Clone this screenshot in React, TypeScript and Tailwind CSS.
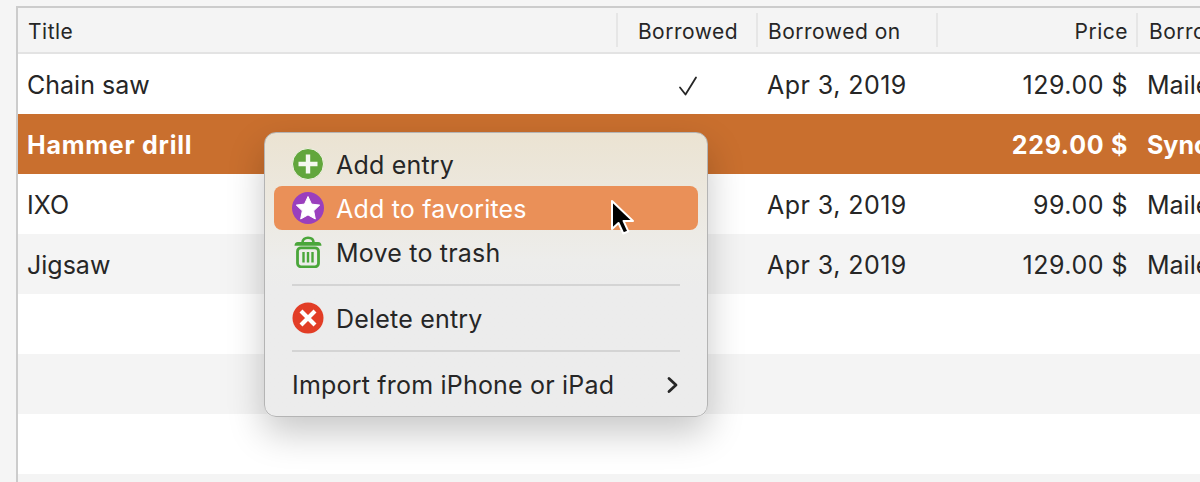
const font = "font-['Inter','Liberation_Sans',sans-serif]";
const cols = "grid grid-cols-[600px_140px_180px_200px_1fr]";

type RowProps = {
  title?: string;
  borrowed?: boolean;
  date?: string;
  price?: string;
  via?: string;
  tone: "white" | "gray" | "selected";
};

const rows: RowProps[] = [
  { title: "Chain saw", borrowed: true, date: "Apr 3, 2019", price: "129.00 $", via: "Mailed", tone: "white" },
  { title: "Hammer drill", borrowed: true, date: "Apr 3, 2019", price: "229.00 $", via: "Synced", tone: "selected" },
  { title: "IXO", date: "Apr 3, 2019", price: "99.00 $", via: "Mailed", tone: "white" },
  { title: "Jigsaw", date: "Apr 3, 2019", price: "129.00 $", via: "Mailed", tone: "gray" },
  { tone: "white" },
  { tone: "gray" },
  { tone: "white" },
  { tone: "gray" },
];

function HeaderCell({ label, className, sep = true }: { label: string; className: string; sep?: boolean }) {
  return (
    <div className={`h-[34px] pt-[3px] flex items-center whitespace-nowrap overflow-hidden ${sep ? "border-r-2 border-[#e6e6e6]" : ""} ${className}`}>
      {label}
    </div>
  );
}

function Row({ title, borrowed, date, price, via, tone }: RowProps) {
  const selected = tone === "selected";
  const bg = selected ? "bg-[#c96f2e] text-white font-bold" : tone === "gray" ? "bg-[#f4f4f4] text-[#262626]" : "bg-white text-[#262626]";
  return (
    <div className={`${cols} h-[60px] pt-[2px] items-center text-[25px] leading-none whitespace-nowrap ${bg}`}>
      <div className={`pl-[9px] ${selected ? "tracking-[0.75px]" : ""}`}>{title}</div>
      <div className="flex justify-center pt-[1px]">
        {borrowed && !selected && (
          <svg width="20" height="20" viewBox="0 0 20 20" fill="none" stroke="#262626" strokeWidth="1.8" strokeLinecap="round" strokeLinejoin="round">
            <path d="M2 11.500l5.500 7L18 1.500" />
          </svg>
        )}
      </div>
      <div className="pl-[9px] tracking-[0.45px]">{selected ? "" : date}</div>
      <div className={`pr-[10px] text-right ${selected ? "tracking-[0.7px]" : "tracking-[0.5px]"}`}>{price}</div>
      <div className="pl-[9px]">{via}</div>
    </div>
  );
}

function PlusIcon() {
  return (
    <svg width="32" height="32" viewBox="0 0 32 32" className="shrink-0">
      <circle cx="16" cy="16" r="15.500" fill="#62a63c" stroke="#f3f3e6" strokeWidth="1" />
      <path d="M16 6.500v19M6.500 16h19" stroke="#f5f8ef" strokeWidth="4.400" />
    </svg>
  );
}

function StarIcon() {
  return (
    <svg width="32" height="32" viewBox="0 0 32 32" className="shrink-0">
      <circle cx="16" cy="16" r="16" fill="#9a3fbd" />
      <path d="M16 4.500l3.500 7.600 8.200 1-6 5.700 1.600 8.200L16 22.900 8.700 27l1.600-8.200-6-5.700 8.200-1z" fill="#fff" stroke="#fff" strokeWidth="1" strokeLinejoin="round" />
    </svg>
  );
}

function TrashIcon() {
  return (
    <svg width="32" height="32" viewBox="0 0 32 32" fill="none" className="shrink-0">
      <path d="M10.500 6.500C10.500 3.500 12.800 1.800 16 1.800s5.500 1.700 5.500 4.700" stroke="#4aa63a" strokeWidth="2.600" />
      <path d="M2.500 9.800c0-2.400 1.200-3.800 3.400-3.800h20.200c2.200 0 3.400 1.400 3.400 3.800z" fill="#4aa63a" />
      <rect x="5.500" y="11.800" width="21" height="19" rx="3.500" stroke="#4aa63a" strokeWidth="2.800" />
      <path d="M11.500 16v10.500M16 16v10.500M20.500 16v10.500" stroke="#4aa63a" strokeWidth="2.400" />
    </svg>
  );
}

function DeleteIcon() {
  return (
    <svg width="32" height="32" viewBox="0 0 32 32" className="shrink-0">
      <circle cx="16" cy="16" r="15.500" fill="#e23d26" />
      <path d="M9 9l14 14M23 9L9 23" stroke="#fff" strokeWidth="4.200" />
    </svg>
  );
}

function MenuItem({ icon, label, active }: { icon: React.ReactNode; label: string; active?: boolean }) {
  return (
    <div className={`h-[44px] mx-[9px] pl-[18px] flex items-center gap-[12px] rounded-[8px] ${active ? "bg-[#ea9058] text-white" : "text-[#262626]"}`}>
      {icon}
      <span className="pt-[2px] whitespace-nowrap">{label}</span>
    </div>
  );
}

function Separator() {
  return <div className="mx-[27px] my-[10px] h-[2px] bg-[#d4d4d4]" />;
}

export default function App() {
  return (
    <div className={`relative w-[1200px] h-[482px] overflow-hidden bg-[#f5f5f5] pl-[16px] pt-[6px] ${font}`}>
      <div className="h-full border-l-2 border-t-2 border-[#cccccc] bg-white">
        <div className={`${cols} h-[46px] items-center bg-[#f4f4f4] border-b-2 border-[#e3e3e3] text-[21px] tracking-[0.5px] text-[#262626]`}>
          <HeaderCell label="Title" className="pl-[10px]" />
          <HeaderCell label="Borrowed" className="justify-center pl-[2px]" />
          <HeaderCell label="Borrowed on" className="pl-[10px]" />
          <HeaderCell label="Price" className="justify-end pr-[8px]" />
          <HeaderCell label="Borrowed via" className="pl-[11px]" sep={false} />
        </div>
        {rows.map((r, i) => (
          <Row key={i} {...r} />
        ))}
      </div>

      {/* context menu */}
      <div className="absolute left-[264px] top-[132px] w-[444px] h-[285px] py-[9px] rounded-[12px] border border-[#b4b4b4] bg-gradient-to-b from-[#ebe3d2] via-[#ededeb] via-[45%] to-[#ececec] to-[55%] shadow-[0_16px_36px_rgba(0,0,0,0.22)] text-[25px] tracking-[0.2px] leading-none">
        <MenuItem icon={<PlusIcon />} label="Add entry" />
        <MenuItem icon={<StarIcon />} label="Add to favorites" active />
        <MenuItem icon={<TrashIcon />} label="Move to trash" />
        <Separator />
        <MenuItem icon={<DeleteIcon />} label="Delete entry" />
        <Separator />
        <div className="h-[44px] mx-[9px] pl-[18px] pr-[18px] pt-[2px] flex items-center justify-between text-[#262626]">
          <span className="whitespace-nowrap">Import from iPhone or iPad</span>
          <svg width="14" height="18" viewBox="0 0 14 18" fill="none" stroke="#262626" strokeWidth="2.800" strokeLinecap="round" strokeLinejoin="round">
            <path d="M3 2.500L10 9l-7 6.500" />
          </svg>
        </div>
      </div>

      {/* mouse pointer */}
      <svg width="28" height="42" viewBox="0 0 28 42" className="absolute left-[609px] top-[198px]">
        <path d="M3 3v28l6.500-6 4.800 10.500 5-2.200-4.800-10.400H24z" fill="#000" stroke="#fff" strokeWidth="2" strokeLinejoin="round" />
      </svg>
    </div>
  );
}
